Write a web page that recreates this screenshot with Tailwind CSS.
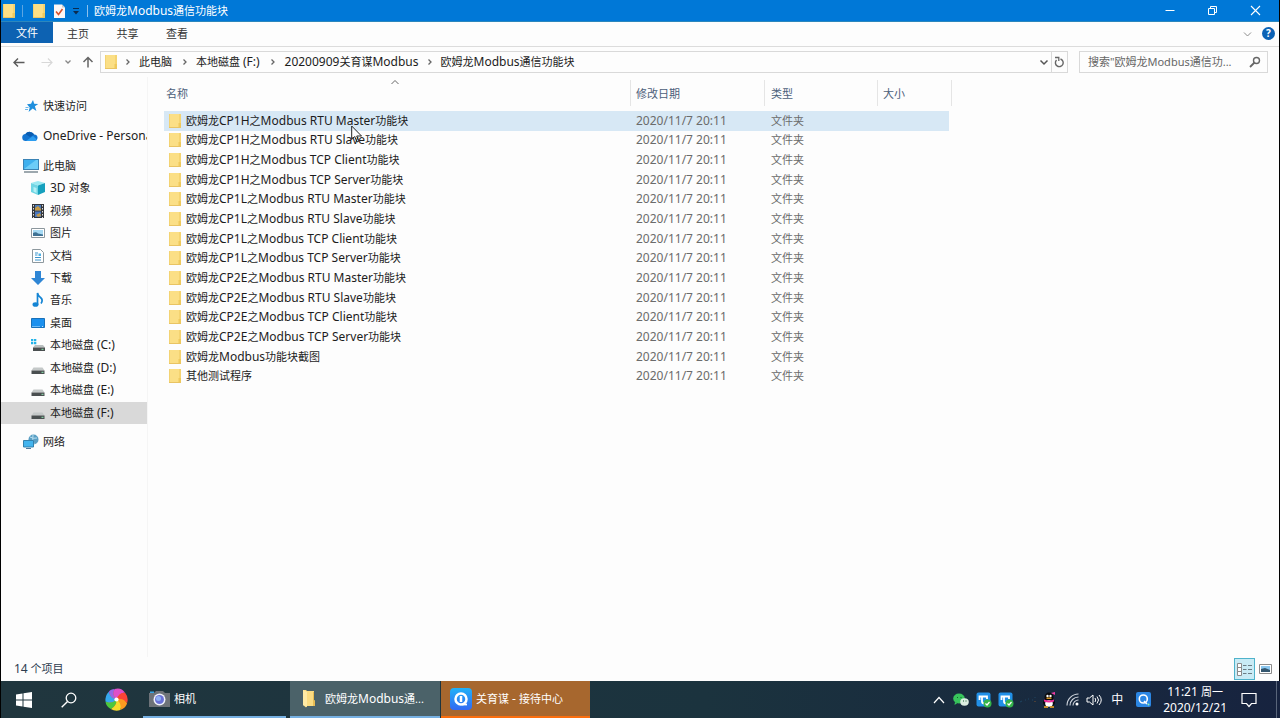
<!DOCTYPE html>
<html lang="zh-CN">
<head>
<meta charset="utf-8">
<title>欧姆龙Modbus通信功能块</title>
<script src="https://cdn.jsdelivr.net/npm/@tailwindcss/browser@4"></script>
</head>
<body class="flex h-screen flex-col overflow-hidden bg-[#fdfdfd] font-['Noto_Sans','Noto_Sans_CJK_SC',sans-serif] text-[11px] leading-[18px] text-[#1c1c1c]">

<svg class="hidden" xmlns="http://www.w3.org/2000/svg">
  <symbol id="folder" viewBox="0 0 14 16"><path d="M1 1h12v14H1z" fill="#fbdf86"/><path d="M1 1h1v14H1z" fill="#f3d373"/><path d="M11.500 1h1v9H13v5h-2.500v-5h1z" fill="#efc95c"/><path d="M1 14.500h12" stroke="#e9c463"/></symbol>
  <symbol id="chev" viewBox="0 0 6 8"><path d="M1.500 1.500L4 4 1.500 6.500" fill="none" stroke="#666" stroke-width="1.300"/></symbol>
  <symbol id="drive" viewBox="0 0 16 16"><path d="M3.500 7.500h9l2 3h-13z" fill="#c4c8c8"/><path d="M1.500 10.500h13V14h-13z" fill="#4a4f50"/><path d="M11.500 12.300h2" stroke="#8ee6b0"/></symbol>
  <symbol id="shield" viewBox="0 0 16 16"><rect x=".5" y=".5" width="14" height="14" rx="2" fill="#2190e8"/><path d="M3.500 8V4.500H11V7M6 4.500v5q0 2 2.500 2" fill="none" stroke="#fff" stroke-width="1.800"/><circle cx="11.500" cy="11.500" r="4" fill="#35b44a"/><path d="M9.500 11.500l1.500 1.500 2.500-3" fill="none" stroke="#fff" stroke-width="1.200"/></symbol>
</svg>

<main class="flex min-h-0 flex-1 flex-col border-x border-black">

  <header class="flex h-[22px] shrink-0 items-center border-b border-[#2c87bd] bg-[#0078d7] text-white">
    <svg class="ml-px h-4 w-[14px]"><use href="#folder"/></svg>
    <span class="ml-[6px] h-3 w-px bg-[#5ba5e2]"></span>
    <button aria-label="属性" class="ml-[9px]"><svg class="h-4 w-[14px]"><use href="#folder"/></svg></button>
    <button aria-label="新建" class="ml-[7px]"><svg class="h-4 w-[13px]" viewBox="0 0 13 16"><path d="M1 1.500h8l3 3V15H1z" fill="#fdf7f5"/><path d="M9 1.500v3h3" fill="#c9c9c9"/><path d="M3 8.500l2.500 3L9.500 6" fill="none" stroke="#d6512e" stroke-width="1.600"/></svg></button>
    <button aria-label="自定义快速访问工具栏" class="ml-[6px]"><svg class="h-2 w-[8px]" viewBox="0 0 8 8"><path d="M1 1.500h6" stroke="#0b2c50"/><path d="M1 4h6L4 7.500z" fill="#0b2c50"/></svg></button>
    <span class="ml-[7px] h-3 w-px bg-[#8cc0ec]"></span>
    <h1 class="ml-[6px]">欧姆龙<span class="text-[12px]">Modbus</span>通信功能块</h1>
    <div class="ml-auto flex items-center pr-[18px]">
      <button aria-label="最小化" class="mr-8"><svg class="h-3 w-[10px]" viewBox="0 0 10 12"><path d="M.5 5.500h9" stroke="#fff"/></svg></button>
      <button aria-label="还原" class="mr-8"><svg class="h-3 w-[11px]" viewBox="0 0 11 12"><path d="M1.500 3.500h6v6h-6zM3.500 3.500v-2h6v6h-2" fill="none" stroke="#fff"/></svg></button>
      <button aria-label="关闭"><svg class="h-3 w-[11px]" viewBox="0 0 11 12"><path d="M1 1l9 9m0-9l-9 9" stroke="#fff" stroke-width="1.100"/></svg></button>
    </div>
  </header>

  <nav class="flex h-[25px] shrink-0 items-start border-b border-[#dcdcdc]">
    <button class="h-[21px] w-[52px] bg-[#0d62b2] text-white">文件</button>
    <button class="h-[23px] w-[50px] text-[#333]">主页</button>
    <button class="h-[23px] w-[49px] text-[#333]">共享</button>
    <button class="h-[23px] w-[50px] text-[#333]">查看</button>
    <div class="ml-auto flex h-[23px] items-center gap-[10px] pr-1">
      <button aria-label="展开功能区"><svg class="h-2 w-[9px]" viewBox="0 0 9 8"><path d="M1 2.500L4.500 6 8 2.500" fill="none" stroke="#8c8c8c"/></svg></button>
      <button aria-label="帮助" class="size-[13px] rounded-full bg-[#0c62b5] text-[10px] leading-[13px] font-bold text-white">?</button>
    </div>
  </nav>

  <div class="flex h-[30px] shrink-0 items-center">
    <button aria-label="后退" class="ml-3"><svg class="h-3 w-[12px]" viewBox="0 0 12 12"><path d="M11.500 6.500H1M5 2.500l-4 4 4 4" fill="none" stroke="#5b5b5b" stroke-width="1.400"/></svg></button>
    <button aria-label="前进" class="ml-4"><svg class="h-3 w-[12px]" viewBox="0 0 12 12"><path d="M.5 6.500H11M7 2.500l4 4-4 4" fill="none" stroke="#d8d8d8" stroke-width="1.200"/></svg></button>
    <button aria-label="最近浏览的位置" class="ml-[11px]"><svg class="h-2 w-[8px]" viewBox="0 0 8 8"><path d="M1.500 2.500L4 5l2.500-2.500" fill="none" stroke="#888" stroke-width="1.300"/></svg></button>
    <button aria-label="上移" class="ml-[10px]"><svg class="h-3 w-[12px]" viewBox="0 0 12 12"><path d="M6 11.500V1.500M1.500 6L6 1.500 10.500 6" fill="none" stroke="#666" stroke-width="1.500"/></svg></button>
    <div class="ml-[6px] flex h-[22px] flex-1 items-center border border-[#d9d9d9]">
      <svg class="ml-[3px] h-4 w-[14px]"><use href="#folder"/></svg>
      <svg class="ml-[7px] h-2 w-[6px]"><use href="#chev"/></svg>
      <button class="ml-[8px]">此电脑</button>
      <svg class="ml-[10px] h-2 w-[6px]"><use href="#chev"/></svg>
      <button class="ml-[8px]">本地磁盘 <span class="text-[12px]">(F:)</span></button>
      <svg class="ml-[10px] h-2 w-[6px]"><use href="#chev"/></svg>
      <button class="ml-[9px]"><span class="text-[12px]">20200909</span>关育谋<span class="text-[12px]">Modbus</span></button>
      <svg class="ml-[8px] h-2 w-[6px]"><use href="#chev"/></svg>
      <button class="ml-[8px]">欧姆龙<span class="text-[12px]">Modbus</span>通信功能块</button>
      <button aria-label="以前的位置" class="mr-[2px] ml-auto"><svg class="h-2 w-[10px]" viewBox="0 0 10 8"><path d="M1.500 2.500L5 6l3.500-3.500" fill="none" stroke="#555" stroke-width="1.500"/></svg></button>
      <button aria-label="刷新" class="flex h-full w-4 items-center justify-center border-l border-[#d9d9d9]"><svg class="h-3 w-[11px]" viewBox="0 0 11 12"><path d="M6.500 3A3.900 3.900 0 1 1 2.500 4" fill="none" stroke="#666" stroke-width="1.400"/><path d="M1 1.500h3.800V5" fill="none" stroke="#666" stroke-width="1.300"/></svg></button>
    </div>
    <label class="mr-[11px] ml-[11px] flex h-[22px] w-[189px] items-center border border-[#d9d9d9] pr-[6px] pl-2">
      <input aria-label="搜索" placeholder="搜索&quot;欧姆龙Modbus通信功..." class="w-0 flex-1 font-['Noto_Sans','Noto_Sans_CJK_SC',sans-serif] text-[11px] outline-none placeholder:text-[#666]">
      <svg class="h-3 w-[12px]" viewBox="0 0 12 12"><circle cx="7.500" cy="4.500" r="3" fill="none" stroke="#666" stroke-width="1.400"/><path d="M5.500 6.500L1 11" stroke="#666" stroke-width="1.800"/></svg>
    </label>
  </div>

  <div class="flex min-h-0 flex-1">
    <aside class="w-[147px] shrink-0 border-r border-[#f5f5f5] pt-[19px]">
      <a href="#" class="flex h-[20px] items-center pl-[24px]"><svg class="mr-[4px] size-[14px] shrink-0" viewBox="0 0 14 14"><path d="M8 1l1.200 3.700 4.100.2-3.400 2.400 1.500 4.700-3.700-2.600L3.600 13l1.100-4.600L2 5.200l4-.4z" fill="#1f8fdd"/><path d="M.5 8.500h3M0 10.500h3" stroke="#6cb8ec"/></svg>快速访问</a>
      <a href="#" class="mt-[10px] flex h-[20px] items-center overflow-hidden pl-[21px] text-[12px] whitespace-nowrap"><svg class="mr-[5px] h-[14px] w-4 shrink-0" viewBox="0 0 16 14"><path d="M4 12a3.500 3.500 0 0 1-.5-7A5 5 0 0 1 12 5.500a3.300 3.300 0 0 1 1 6.500z" fill="#1374d0"/><path d="M4 12l7-5 3.800 3.500q-.5 1.500-2 1.500z" fill="#2c9df0"/><path d="M3.500 5A5 5 0 0 1 12 5.500L8 8z" fill="#0a5cb0"/></svg>OneDrive - Personal</a>
      <a href="#" class="mt-[10px] flex h-[20px] items-center pl-[22px]"><svg class="mr-[4px] h-[14px] w-4 shrink-0" viewBox="0 0 16 14"><rect x=".5" y=".5" width="15" height="10" fill="#3fb0ee" stroke="#3a83b5"/><path d="M1 10L13 1h2v9z" fill="#6cccf8"/><path d="M1 13h14" stroke="#7d8b93" stroke-width="1.500"/></svg>此电脑</a>
      <div class="mt-[1px] grid h-[247px] grid-rows-11">
        <a href="#" class="flex min-h-0 items-center pl-[29px]"><svg class="mr-[4px] size-4 shrink-0" viewBox="0 0 16 16"><path d="M1 3l7-2 7 2-7 2.500z" fill="#9be9f2"/><path d="M1 3l7 2.500V15l-7-3z" fill="#6fd6e4"/><path d="M15 3L8 5.500V15l7-3z" fill="#16a0bd"/><path d="M3.500 7l3 1v5l-3-1.500z" fill="#b5f0f6"/></svg><span class="text-[12px]">3D</span>&nbsp;对象</a>
        <a href="#" class="flex min-h-0 items-center pl-[29px]"><svg class="mr-[4px] size-4 shrink-0" viewBox="0 0 16 16"><path d="M2 1h12v14H2z" fill="#33363b"/><path d="M5 2h6v5.500H5z" fill="#4e7cb8"/><path d="M5 8.500h6V14H5z" fill="#4a77c0"/><path d="M5 5l3-2 3 3v1.500H5zM6 12l4-2 1 3-3 1z" fill="#c59a45"/><path d="M3.500 2v13M12.500 2v13" stroke="#ddd" stroke-dasharray="1.500 1.500"/></svg>视频</a>
        <a href="#" class="flex min-h-0 items-center pl-[29px]"><svg class="mr-[4px] size-4 shrink-0" viewBox="0 0 16 16"><path d="M1.500 3.500h13v9h-13z" fill="#fff" stroke="#8c979d"/><path d="M3 5h10v6H3z" fill="#a6daf4"/><path d="M3 8q3-1.500 5 .5l5 1V11H3z" fill="#3f7294"/></svg>图片</a>
        <a href="#" class="flex min-h-0 items-center pl-[29px]"><svg class="mr-[4px] size-4 shrink-0" viewBox="0 0 16 16"><path d="M2.500 1.500h8l3 3v10h-11z" fill="#fff" stroke="#8d989e"/><path d="M5 5h3M5 7h2.500M5 9.500h6M5 12h6" stroke="#3b94cc"/><path d="M8.500 5.500h2.500v2.500H8.500z" fill="#53b2e4"/></svg>文档</a>
        <a href="#" class="flex min-h-0 items-center pl-[29px]"><svg class="mr-[4px] size-4 shrink-0" viewBox="0 0 16 16"><path d="M5 1h6v7h4l-7 7-7-7h4z" fill="#2f86d5"/></svg>下载</a>
        <a href="#" class="flex min-h-0 items-center pl-[29px]"><svg class="mr-[4px] size-4 shrink-0" viewBox="0 0 16 16"><ellipse cx="5.500" cy="12.500" rx="3" ry="2.300" fill="#1585d4"/><path d="M7.500 12.500V1q.5 3 3 4.500 3 2.500.5 6" fill="none" stroke="#1585d4" stroke-width="1.700"/></svg>音乐</a>
        <a href="#" class="flex min-h-0 items-center pl-[29px]"><svg class="mr-[4px] size-4 shrink-0" viewBox="0 0 16 16"><path d="M1.500 3.500h13v9h-13z" fill="#1b90ee" stroke="#1971b9"/><path d="M2.500 11.500h8M12 11.500h2" stroke="#bfe4ff" stroke-dasharray="1 1"/></svg>桌面</a>
        <a href="#" class="flex min-h-0 items-center pl-[29px]"><svg class="mr-[4px] size-4 shrink-0" viewBox="0 0 16 16"><path d="M5 8h8l2 2.500H3z" fill="#b9bfbf"/><path d="M3 10.500h12V14H3z" fill="#4a4f50"/><path d="M11.500 12.300h2" stroke="#8ee6b0"/><path d="M1 2h2.300v2.300H1zM4 2h2.300v2.300H4zM1 5h2.300v2.300H1zM4 5h2.300v2.300H4z" fill="#23b3e8"/></svg>本地磁盘&nbsp;<span class="text-[12px]">(C:)</span></a>
        <a href="#" class="flex min-h-0 items-center pl-[29px]"><svg class="mr-[4px] size-4 shrink-0"><use href="#drive"/></svg>本地磁盘&nbsp;<span class="text-[12px]">(D:)</span></a>
        <a href="#" class="flex min-h-0 items-center pl-[29px]"><svg class="mr-[4px] size-4 shrink-0"><use href="#drive"/></svg>本地磁盘&nbsp;<span class="text-[12px]">(E:)</span></a>
        <a href="#" aria-current="page" class="flex min-h-0 items-center bg-[#d9d9d9] pl-[29px]"><svg class="mr-[4px] size-4 shrink-0"><use href="#drive"/></svg>本地磁盘&nbsp;<span class="text-[12px]">(F:)</span></a>
      </div>
      <a href="#" class="mt-[8px] flex h-[20px] items-center pl-[22px]"><svg class="mr-[4px] size-4 shrink-0" viewBox="0 0 16 16"><circle cx="10.500" cy="5.500" r="5" fill="#5a9fc4"/><path d="M7 3q3 2 7 1M10 1q-1 4 1 9" fill="none" stroke="#b9dff0"/><path d="M.5 6.500h10v6.500H.5z" fill="#43b4ee" stroke="#3381ad"/><path d="M3 14.500h5" stroke="#52799b"/></svg>网络</a>
    </aside>

    <section class="min-w-0 flex-1 pl-[16px]">
      <table class="h-[309px] w-[788px] table-fixed border-collapse text-left">
        <colgroup><col class="w-[467px]"><col class="w-[134px]"><col class="w-[113px]"><col class="w-[71px]"><col class="w-[3px]"></colgroup>
        <thead class="text-[#4c607a]">
          <tr class="h-[34px]">
            <th class="relative p-0 font-normal"><svg class="absolute top-[2px] left-[227px] h-[6px] w-[8px]" viewBox="0 0 8 6"><path d="M.5 5L4 1.500 7.500 5" fill="none" stroke="#666"/></svg><div class="mb-[3px] h-[26px] border-r border-[#e5e5e5] pl-[2px] leading-[27px]">名称</div></th>
            <th class="p-0 font-normal"><div class="mb-[3px] h-[26px] border-r border-[#e5e5e5] pl-[5px] leading-[27px]">修改日期</div></th>
            <th class="p-0 font-normal"><div class="mb-[3px] h-[26px] border-r border-[#e5e5e5] pl-[6px] leading-[27px]">类型</div></th>
            <th class="p-0 font-normal"><div class="mb-[3px] h-[26px] pl-[5px] leading-[27px]">大小</div></th>
            <td class="p-0"><div class="mb-[3px] h-[26px] border-r border-[#e5e5e5]"></div></td>
          </tr>
        </thead>
        <tbody id="files"></tbody>
      </table>
    </section>
  </div>

  <footer class="flex h-[24px] shrink-0 items-center pl-[13px] text-[#2d3c50]">
    <span><span class="text-[12px]">14</span> 个项目</span>
    <button aria-label="详细信息" class="ml-auto flex h-[22px] w-[21px] items-center justify-center border border-[#4fb3cb] bg-[#c9ebf5]"><svg class="h-[13px] w-[15px]" viewBox="0 0 15 13"><path d="M.5.500h4v12h-4zM.5 4.500h4M.5 8.500h4" fill="#fff" stroke="#8b8b8b"/><path d="M6 2.500h3.500M6 6.500h3.500M6 10.500h3.500M11 2.500h4M11 6.500h4M11 10.500h4" stroke="#6b7c85"/></svg></button>
    <button aria-label="大缩略图" class="mr-[7px] ml-[4px]"><svg class="h-[10px] w-[13px]" viewBox="0 0 13 10"><path d="M.5.500h12v9H.5z" fill="#fff" stroke="#8b8b8b"/><path d="M2 2h9v6H2z" fill="#8cc8f0"/><path d="M2 5l4-1 5 2v2H2z" fill="#33566e"/></svg></button>
  </footer>
</main>

<div class="flex h-[37px] shrink-0 items-stretch border-l border-black bg-linear-to-r from-[#20363e] via-[#1b333e] via-55% to-[#17233f] text-white">
  <button aria-label="开始" class="flex w-[45px] items-center justify-center"><svg class="h-4 w-[16px]" viewBox="0 0 16 16"><path d="M0 2.500l6.500-1v6H0zM7.500 1.300L16 0v7.500H7.500zM0 8.500h6.500v6L0 13.500zM7.500 8.500H16V16l-8.500-1.300z" fill="#fff"/></svg></button>
  <button aria-label="搜索" class="flex w-[45px] items-center justify-center"><svg class="h-4 w-[16px]" viewBox="0 0 16 16"><circle cx="10" cy="6" r="4.800" fill="none" stroke="#fff" stroke-width="1.300"/><path d="M6.500 9.500L.7 15.300" stroke="#fff" stroke-width="1.400"/></svg></button>
  <button aria-label="浏览器" class="flex w-[50px] items-center justify-center"><svg class="size-[23px]" viewBox="-12 -12 24 24"><circle r="10" fill="#f0622c"/><path d="M0 0Q-5-5-2-11 5-13 9-7 3-8 0 0z" fill="#e04fc8"/><path d="M0 0Q3-8 9-7 13-2 11 4 7-2 0 0z" fill="#fb4437"/><path d="M0 0Q7-2 11 4 10 9 4 11 6 4 0 0z" fill="#fb9a20"/><path d="M0 0Q6 4 4 11-1 13-6 10 0 7 0 0z" fill="#f5dc2c"/><path d="M0 0Q0 7-6 10-11 7-11.500 2-5 5 0 0z" fill="#4cc93c"/><path d="M0 0Q-5 5-11.500 2-12-4-8-8-7-2 0 0z" fill="#35a8ef"/><path d="M0 0Q-7-2-8-8-6-11-2-11-5-5 0 0z" fill="#9566e8"/><circle r="2.200" fill="#fff"/></svg></button>
  <button class="ml-[2px] flex w-[143px] items-center border-b-2 border-[#76b0e2] pl-[5px]"><svg class="mr-[3px] h-[18px] w-[23px]" viewBox="0 0 23 18"><path d="M1 3h5l2-2h7l2 2h5v14H1z" fill="#6e7379"/><path d="M2 1.500h4V3H2z" fill="#35a7e6"/><circle cx="11.500" cy="9.500" r="6" fill="#eef0fa"/><circle cx="11.500" cy="9.500" r="4.500" fill="#6a72d8"/><circle cx="10.500" cy="8.500" r="2.500" fill="#8fb2f2"/></svg>相机</button>
  <button class="ml-[4px] flex w-[150px] items-center border-b-2 border-[#76b0e2] bg-[#4b6269] pl-[12px]"><svg class="mr-[9px] h-[19px] w-[14px]" viewBox="0 0 14 19"><path d="M1 1h3l1 1h7v9l1 1v5H5l-1 1.500L1 16z" fill="#fbdc82"/><path d="M1 1l4 2v15l-4-2z" fill="#ffeaa5"/><path d="M11 3h1v8l1 1v5h-2z" fill="#e8bd54"/></svg><span>欧姆龙<span class="text-[12px]">Modbus</span>通...</span></button>
  <button class="ml-px flex w-[149px] items-center border-b-2 border-[#fb6e0e] bg-[#a7672e] pl-[9px]"><svg class="mr-[4px] size-[22px]" viewBox="0 0 22 22"><defs><linearGradient id="qg" x2="0" y2="1"><stop stop-color="#20b2f8"/><stop offset="1" stop-color="#3268f2"/></linearGradient></defs><rect width="22" height="22" rx="4" fill="url(#qg)"/><circle cx="11" cy="11" r="5.500" fill="none" stroke="#fff" stroke-width="2.500"/><path d="M11 8v6" stroke="#fff" stroke-width="2.500"/><path d="M12 16.500h5" stroke="#fff" stroke-width="1.800"/></svg><span>关育谋<span class="text-[12px]"> - </span>接待中心</span></button>

  <div class="ml-auto flex items-center">
    <button aria-label="显示隐藏的图标" class="mr-[8px]"><svg class="h-2 w-[12px]" viewBox="0 0 12 8"><path d="M1 7l5-5.500L11 7" fill="none" stroke="#fff" stroke-width="1.200"/></svg></button>
    <svg class="mr-[7px] h-[14px] w-4" viewBox="0 0 16 14"><ellipse cx="6" cy="5.500" rx="5.800" ry="5" fill="#38c45c"/><path d="M2 9l-.5 3 3-2z" fill="#38c45c"/><ellipse cx="11.500" cy="9" rx="4.300" ry="3.700" fill="#dceee2"/><path d="M4 4.500h1M7.500 4.500h1M10 8h1M12.500 8h1" stroke="#175e31"/></svg>
    <svg class="mr-[6px] size-4"><use href="#shield"/></svg>
    <svg class="mr-[5px] size-4"><use href="#shield"/></svg>
    <svg class="mr-[5px] h-3 w-[18px]" viewBox="0 0 18 12"><path d="M1 8l2-1M6 6h1M9 5h1M13 6h1M16 3v1" stroke="#1f4562"/><path d="M16 7v1" stroke="#7d5330"/></svg>
    <svg class="mr-[10px] h-4 w-[14px]" viewBox="0 0 14 16"><ellipse cx="7" cy="5.500" rx="4.500" ry="5" fill="#0b0b0e"/><ellipse cx="7" cy="10.500" rx="6" ry="4.500" fill="#0b0b0e"/><ellipse cx="7" cy="11.500" rx="3.800" ry="3.200" fill="#fff"/><circle cx="5.500" cy="4" r="1.200" fill="#fff"/><circle cx="8.500" cy="4" r="1.200" fill="#fff"/><path d="M4.500 6.200h5" stroke="#f6a823" stroke-width="1.300"/><path d="M2 7.500q5 2 10 0v2q-5 2-10 0z" fill="#ee2c9c"/><path d="M9 1l4-1v3z" fill="#f03ba5"/><path d="M2 15h4M8 15h4" stroke="#f6a823" stroke-width="1.600"/></svg>
    <svg class="mr-[7px] size-[13px]" viewBox="0 0 13 13"><path d="M1 12.500A11.500 11.500 0 0 1 12.500 1M4 12.500A8.500 8.500 0 0 1 12.500 4M7 12.500A5.500 5.500 0 0 1 12.500 7" fill="none" stroke="#cfd5dd" stroke-width="1.100"/><circle cx="11" cy="11" r="1.500" fill="#fff"/></svg>
    <svg class="mr-[9px] h-[14px] w-[16px]" viewBox="0 0 16 14"><path d="M1 5h2.500L7 2v10L3.500 9H1z" fill="none" stroke="#fff"/><path d="M9 5q1.500 2 0 4M11 3.500q3 3.500 0 7M13 2q4.500 5 0 10" fill="none" stroke="#fff"/></svg>
    <button class="mr-[13px] text-[12px]">中</button>
    <svg class="mr-[12px] size-[15px]" viewBox="0 0 15 15"><rect width="15" height="15" rx="2" fill="#2b86e4"/><circle cx="7.300" cy="7" r="4" fill="none" stroke="#fff" stroke-width="1.600"/><path d="M8 9l3 3" stroke="#fff" stroke-width="1.500"/><circle cx="12.500" cy="12.500" r="1" fill="#8ff0b0"/></svg>
    <button class="mr-[14px] text-center text-[12px] leading-4">11:21 <span class="text-[11px]">周一</span><br>2020/12/21</button>
    <button aria-label="通知" class="mr-[19px]"><svg class="size-[16px]" viewBox="0 0 16 16"><path d="M1 1.500h14v10h-4.500L8 14.500l-2.500-3H1z" fill="none" stroke="#fff" stroke-width="1.200"/></svg></button>
    <span class="mr-[3px] h-full w-px bg-[#59657a]"></span>
  </div>
</div>

<script>
  const files = [
    '欧姆龙CP1H之Modbus RTU Master功能块',
    '欧姆龙CP1H之Modbus RTU Slave功能块',
    '欧姆龙CP1H之Modbus TCP Client功能块',
    '欧姆龙CP1H之Modbus TCP Server功能块',
    '欧姆龙CP1L之Modbus RTU Master功能块',
    '欧姆龙CP1L之Modbus RTU Slave功能块',
    '欧姆龙CP1L之Modbus TCP Client功能块',
    '欧姆龙CP1L之Modbus TCP Server功能块',
    '欧姆龙CP2E之Modbus RTU Master功能块',
    '欧姆龙CP2E之Modbus RTU Slave功能块',
    '欧姆龙CP2E之Modbus TCP Client功能块',
    '欧姆龙CP2E之Modbus TCP Server功能块',
    '欧姆龙Modbus功能块截图',
    '其他测试程序',
  ];
  // Latin runs are set one size larger than the Chinese characters
  const label = s => s.replace(/[A-Za-z0-9 ]+/g, '<span class="text-[12px]">$&</span>');
  const cursor = '<svg class="absolute top-[13px] left-[187px] h-[18px] w-[12px]" viewBox="0 0 12 18"><path d="M.7 1v13.500l3-3 2.300 5.500 2-1-2.300-5H10.500z" fill="#fff" fill-opacity=".7" stroke="#222"/></svg>';
  document.getElementById('files').innerHTML = files.map((f, i) => `
    <tr class="${i ? '' : 'bg-[#d7e8f5]'}">
      <td class="p-0"><div class="relative flex h-[18px] items-center pl-[4px]"><svg class="mr-[4px] h-4 w-[14px]"><use href="#folder"/></svg><span>${label(f)}</span>${i ? '' : cursor}</div></td>
      <td class="p-0 pl-[5px] text-[12px] text-[#6b6b6b]">2020/11/7 20:11</td>
      <td class="p-0 pl-[6px] text-[#6b6b6b]">文件夹</td>
      <td class="p-0"></td>
      <td class="bg-[#fdfdfd] p-0"></td>
    </tr>`).join('');
</script>
</body>
</html>
